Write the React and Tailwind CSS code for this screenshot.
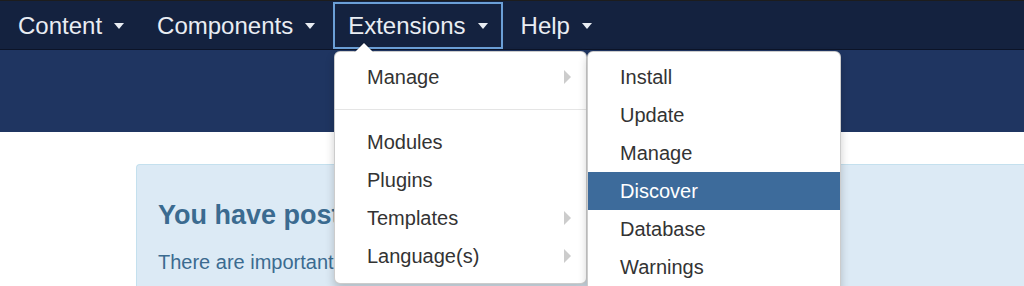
import React from 'react';

const navItems = ['Content', 'Components', 'Extensions', 'Help'];

const Caret = () => (
  <span className="inline-block w-0 h-0 border-x-[5px] border-x-transparent border-t-[6px] border-t-[#e9edf3]" />
);

const SubArrow = () => (
  <span className="inline-block w-0 h-0 border-y-[7px] border-y-transparent border-l-[7px] border-l-[#cccccc]" />
);

const MenuItem = ({ label, sub, active }) => (
  <div
    className={`flex items-center justify-between h-[38px] pl-[32px] pr-[15px] text-[20px] ${
      active ? 'bg-[#3d6b9b] text-white' : 'text-[#333333]'
    }`}
  >
    <span>{label}</span>
    {sub && <SubArrow />}
  </div>
);

export default function App() {
  return (
    <div
      className="relative w-[1024px] h-[286px] overflow-hidden bg-white"
      style={{ fontFamily: '"Liberation Sans", Arial, sans-serif' }}
    >
      {/* Top navigation */}
      <div className="h-[50px] bg-[#14223f] border-t border-t-[#1d1d1d] border-b border-b-[#0c1428] flex items-stretch pl-[3px] gap-[3px]">
        {navItems.map((item) => (
          <div
            key={item}
            className={`flex items-center gap-[12px] px-[13px] mt-[1px] mb-0 border-2 text-[24px] text-[#e9edf3] ${
              item === 'Extensions' ? 'border-[#6b9fd6]' : 'border-transparent'
            }`}
          >
            <span>{item}</span>
            <Caret />
          </div>
        ))}
      </div>

      {/* Header band */}
      <div className="h-[82px] bg-[#1f3561]" />

      {/* Content */}
      <div className="pt-[32px] pl-[136px]">
        <div className="w-[1000px] h-[200px] bg-[#dceaf5] border-t border-l border-[#c4e0ee] rounded-tl-[4px] pl-[21px] pt-[35px]">
          <h2 className="text-[27px] leading-[31px] font-bold text-[#3b6b90]">You have post-installation messages</h2>
          <p className="mt-[19px] text-[20px] leading-[24px] text-[#3b6b90]">
            There are important post-installation messages that require your attention.
          </p>
        </div>
      </div>

      {/* Extensions dropdown */}
      <div className="absolute left-[334px] top-[51px] w-[253px] bg-white rounded-[6px] border border-black/20 shadow-[0_5px_10px_rgba(0,0,0,0.2)] pt-[6px] pb-[8px]">
        <span className="absolute -top-[10px] left-[19px] w-0 h-0 border-x-[10px] border-x-transparent border-b-[10px] border-b-black/20" />
        <span className="absolute -top-[9px] left-[20px] w-0 h-0 border-x-[9px] border-x-transparent border-b-[9px] border-b-white" />
        <MenuItem label="Manage" sub />
        <div className="my-[13px] h-px bg-[#e5e5e5]" />
        <MenuItem label="Modules" />
        <MenuItem label="Plugins" />
        <MenuItem label="Templates" sub />
        <MenuItem label="Language(s)" sub />
      </div>

      {/* Manage submenu */}
      <div className="absolute left-[587px] top-[51px] w-[254px] bg-white rounded-[6px] border border-black/20 shadow-[0_5px_10px_rgba(0,0,0,0.2)] pt-[6px] pb-[7px]">
        <MenuItem label="Install" />
        <MenuItem label="Update" />
        <MenuItem label="Manage" />
        <MenuItem label="Discover" active />
        <MenuItem label="Database" />
        <MenuItem label="Warnings" />
      </div>
    </div>
  );
}
